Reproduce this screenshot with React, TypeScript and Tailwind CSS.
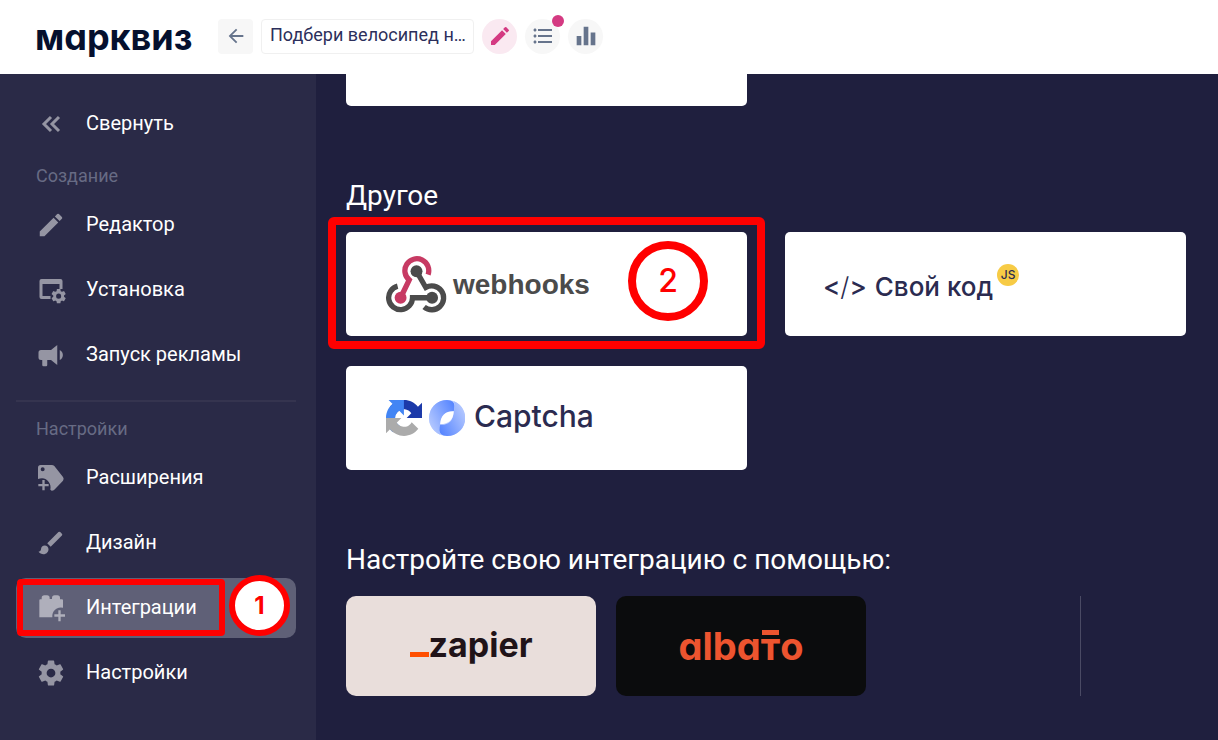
import { useState } from "react";
import type { ReactNode } from "react";
import { MdArrowBack, MdBrush, MdEdit, MdEqualizer, MdFormatListBulleted } from "react-icons/md";

const COG =
  "M12,15.5A3.5,3.5 0 0,1 8.5,12A3.5,3.5 0 0,1 12,8.5A3.5,3.5 0 0,1 15.5,12A3.5,3.5 0 0,1 12,15.5M19.43,12.97C19.47,12.65 19.5,12.33 19.5,12C19.5,11.67 19.47,11.34 19.43,11L21.54,9.37C21.73,9.22 21.78,8.95 21.66,8.73L19.66,5.27C19.54,5.05 19.27,4.96 19.05,5.05L16.56,6.05C16.04,5.66 15.5,5.32 14.87,5.07L14.5,2.42C14.46,2.18 14.25,2 14,2H10C9.75,2 9.54,2.18 9.5,2.42L9.13,5.07C8.5,5.32 7.96,5.66 7.44,6.05L4.95,5.05C4.73,4.96 4.46,5.05 4.34,5.27L2.34,8.73C2.21,8.95 2.27,9.22 2.46,9.37L4.57,11C4.53,11.34 4.5,11.67 4.5,12C4.5,12.33 4.53,12.65 4.57,12.97L2.46,14.63C2.27,14.78 2.21,15.05 2.34,15.27L4.34,18.73C4.46,18.95 4.73,19.03 4.95,18.95L7.44,17.94C7.96,18.34 8.5,18.68 9.13,18.93L9.5,21.58C9.54,21.82 9.75,22 10,22H14C14.25,22 14.46,21.82 14.5,21.58L14.87,18.93C15.5,18.67 16.04,18.34 16.56,17.94L19.05,18.95C19.27,19.03 19.54,18.95 19.66,18.73L21.66,15.27C21.78,15.05 21.73,14.78 21.54,14.63L19.43,12.97Z";

const CollapseIcon = () => (
  <svg viewBox="0 0 30 30" width={30} height={30} fill="none" stroke="currentColor" strokeWidth={3} aria-hidden="true">
    <path d="M15 8L8 15L15 22M23 8L16 15L23 22" />
  </svg>
);

const InstallIcon = () => (
  <svg viewBox="0 0 30 30" width={30} height={30} fill="currentColor" aria-hidden="true">
    <path d="M5.5 4h19a2 2 0 0 1 2 2v8h-3V9h-17v12h8v3h-9a2 2 0 0 1-2-2V6a2 2 0 0 1 2-2z" />
    <g transform="translate(14 12.500) scale(.72)">
      <path fillRule="evenodd" d={COG} />
    </g>
  </svg>
);

const MegaphoneIcon = () => (
  <svg viewBox="0 0 24 24" width={30} height={30} fill="currentColor" aria-hidden="true">
    <path d="M12,8H4A2,2 0 0,0 2,10V14A2,2 0 0,0 4,16H5V20A1,1 0 0,0 6,21H8A1,1 0 0,0 9,20V16H12L17,20V4L12,8M21.5,12C21.5,13.71 20.54,15.26 19,16V8C20.53,8.75 21.5,10.3 21.5,12Z" />
  </svg>
);

const TagPlusIcon = () => (
  <svg viewBox="108 39 90 90" width={30} height={30} fill="currentColor" aria-hidden="true">
    <path
      fillRule="evenodd"
      d="M122 45h33q5 0 8 3l26 33q4 5 0 11l-26 27q-3 3-8 3l-4-3c4-16-8-34-25-34q-6 0-12 2V53q0-8 8-8zM128 52a6 6 0 1 0 0 12a6 6 0 1 0 0-12z"
    />
    <path d="M127 90h7v12h12v7h-12v12h-7v-12h-12v-7h12z" />
  </svg>
);

const BrickPlusIcon = () => (
  <svg viewBox="108 86 90 90" width={30} height={30} fill="currentColor" aria-hidden="true">
    <path d="M118 159v-51q0-3 3-3h4v-4q0-8 8-8h8q8 0 8 8v3h7v-3q0-8 8-8h8q8 0 8 8v4h6q3 0 3 3v22a26 26 0 0 0-32 29z" />
    <path d="M175 138h7v12h13v7h-13v14h-7v-14h-12v-7h12z" />
  </svg>
);

const CogIcon = () => (
  <svg viewBox="0 0 24 24" width={30} height={30} fill="currentColor" aria-hidden="true">
    <path fillRule="evenodd" d={COG} />
  </svg>
);

const WebhooksIcon = () => (
  <svg viewBox="198 272 184 172" width={61} height={57} fill="none" strokeWidth={16} aria-hidden="true">
    <path d="M325 328A36 36 0 1 0 268 344L242 398" stroke="#c73a63" />
    <path d="M290 318L318 367A36 36 0 1 1 313 426" stroke="#4b4b4b" />
    <path d="M337 398H278A36 36 0 1 1 233 363" stroke="#4b4b4b" />
    <circle cx={242} cy={398} r={18} fill="#c73a63" />
    <circle cx={290} cy={318} r={18} fill="#4b4b4b" />
    <circle cx={337} cy={398} r={18} fill="#4b4b4b" />
  </svg>
);

const RecaptchaIcon = () => (
  <svg viewBox="0 0 64 64" width={36} height={36} aria-hidden="true">
    <path fill="#1c3aa9" d="M64 31.955l-.033-1.37V4.687l-7.16 7.16C50.948 4.674 42.033.093 32.05.093c-10.4 0-19.622 4.96-25.458 12.64l11.736 11.86a15.55 15.55 0 0 1 4.754-5.334c2.05-1.6 4.952-2.906 8.968-2.906.485 0 .86.057 1.135.163 4.976.393 9.288 3.14 11.828 7.124l-8.307 8.307L64 31.953" />
    <path fill="#4285f4" d="M31.862.094l-1.37.033H4.594l7.16 7.16C4.58 13.147 0 22.06 0 32.046c0 10.4 4.96 19.622 12.64 25.458L24.5 45.768a15.55 15.55 0 0 1-5.334-4.754c-1.6-2.05-2.906-4.952-2.906-8.968 0-.485.057-.86.163-1.135.393-4.976 3.14-9.288 7.124-11.828l8.307 8.307L31.86.095" />
    <path fill="#ababab" d="M.001 32.045l.033 1.37v25.898l7.16-7.16c5.86 7.173 14.774 11.754 24.76 11.754 10.4 0 19.622-4.96 25.458-12.64l-11.736-11.86a15.55 15.55 0 0 1-4.754 5.334c-2.05 1.6-4.952 2.906-8.968 2.906-.485 0-.86-.057-1.135-.163-4.976-.393-9.288-3.14-11.828-7.124l8.307-8.307c-10.522.04-22.4.066-27.295-.005" />
  </svg>
);

const SmartCaptchaIcon = () => (
  <svg viewBox="267 121 106 106" width={36} height={36} aria-hidden="true">
    <defs>
      <linearGradient id="lobeLeft" x1="0" y1="0.700" x2="1" y2="0">
        <stop offset="0" stopColor="#b4c8ff" />
        <stop offset="1" stopColor="#4f80ff" />
      </linearGradient>
      <linearGradient id="lobeRight" x1="0" y1="1" x2="1" y2="0.300">
        <stop offset="0" stopColor="#4f80ff" />
        <stop offset="1" stopColor="#b4c8ff" />
      </linearGradient>
    </defs>
    <circle cx={320} cy={174} r={53} fill="#bdcfff" />
    <path d="M320 121Q341 122 342 138Q342 148 340 154Q302 152 300 194L300 223A53 53 0 0 1 320 121z" fill="url(#lobeLeft)" />
    <path d="M320 227Q299 226 298 210Q298 200 300 194Q338 196 340 154Q344 142 341 125A53 53 0 0 1 320 227z" fill="url(#lobeRight)" />
    <path d="M340 154Q338 192 300 192Q302 154 340 154z" fill="#fff" />
  </svg>
);

type NavItem = { id: string; label: string; icon: ReactNode };

const CREATE_ITEMS: NavItem[] = [
  { id: "editor", label: "Редактор", icon: <MdEdit size={30} /> },
  { id: "install", label: "Установка", icon: <InstallIcon /> },
  { id: "ads", label: "Запуск рекламы", icon: <MegaphoneIcon /> },
];

const SETTINGS_ITEMS: NavItem[] = [
  { id: "extensions", label: "Расширения", icon: <TagPlusIcon /> },
  { id: "design", label: "Дизайн", icon: <MdBrush size={30} /> },
  { id: "integrations", label: "Интеграции", icon: <BrickPlusIcon /> },
  { id: "settings", label: "Настройки", icon: <CogIcon /> },
];

function NavLink({ item, active, onSelect }: { item: NavItem; active: boolean; onSelect: (id: string) => void }) {
  return (
    <a
      href={`#${item.id}`}
      onClick={() => onSelect(item.id)}
      className={`relative flex h-[60px] items-center gap-5 rounded-[10px] px-5 text-xl text-white ${active ? "bg-[#5f6077]" : ""}`}
    >
      <span className={active ? "text-[#afafbb]" : "text-[#9595a3]"}>{item.icon}</span>
      <span className="pb-0.5">{item.label}</span>
      {item.id === "integrations" && (
        <>
          <span className="absolute top-px left-px h-[57px] w-[208px] rounded-sm border-6 border-[#ff0000]" />
          <span className="absolute -top-[3px] right-[6px] flex size-[61px] items-center justify-center rounded-full border-6 border-[#ff0000] bg-white font-[Inter,sans-serif] text-2xl font-bold text-[#ff0000]">
            1
          </span>
        </>
      )}
    </a>
  );
}

export default function App() {
  const [active, setActive] = useState("integrations");
  const [title, setTitle] = useState("Подбери велосипед н…");

  return (
    <div className="flex min-h-screen flex-col bg-[#1f1f3e] font-[Roboto,sans-serif]">
      {/* HEADER */}
      <header className="flex h-[74px] items-center gap-2 bg-white pb-px pl-[35px]">
        <a href="#home" className="w-[175px] font-[Inter,sans-serif] text-4xl font-bold text-[#05102e] [font-feature-settings:'cv11']">марквиз</a>
        <button aria-label="Назад" className="flex size-[35px] items-center justify-center rounded bg-[#f7f7f7] pb-0.5 text-[#66748c]"><MdArrowBack size={22} /></button>
        <input
          aria-label="Название квиза"
          value={title}
          onChange={(e) => setTitle(e.target.value)}
          className="h-[35px] w-[213px] rounded border border-[#f0f0f0] pb-1 pl-2 text-lg text-[#2c2f5b]"
        />
        <button aria-label="Редактировать" className="flex size-[35px] items-center justify-center rounded-full bg-[#fae9f1] pb-0.5 text-[#d43a82]"><MdEdit size={24} /></button>
        <button aria-label="Заявки" className="relative flex size-[35px] items-center justify-center rounded-full bg-[#f7f7f7] pb-0.5 text-[#66748c]">
          <MdFormatListBulleted size={24} />
          <span className="absolute -top-1 -right-1 size-3 rounded-full bg-[#d43a82]" />
        </button>
        <button aria-label="Статистика" className="flex size-[35px] items-center justify-center rounded-full bg-[#f7f7f7] pb-0.5 text-[#66748c]"><MdEqualizer size={28} /></button>
      </header>

      <div className="flex flex-1">
        {/* SIDEBAR */}
        <nav className="w-[316px] shrink-0 bg-[#2a2a47] px-4 pt-5 pr-5">
          <button className="flex h-[60px] w-full items-center gap-5 px-5 text-xl text-white">
            <span className="text-[#9595a3]"><CollapseIcon /></span>
            <span className="pb-0.5">Свернуть</span>
          </button>
          <h2 className="flex h-[41px] items-center px-5 pt-0.5 text-lg text-[#676b84]">Создание</h2>
          <div className="flex flex-col gap-[5px]">
            {CREATE_ITEMS.map((item) => (
              <NavLink key={item.id} item={item} active={active === item.id} onSelect={setActive} />
            ))}
          </div>
          <hr className="mt-[15px] border-t-2 border-[#35344f]" />
          <h2 className="flex h-[46px] items-center px-5 pt-2 text-lg text-[#676b84]">Настройки</h2>
          <div className="flex flex-col gap-[5px]">
            {SETTINGS_ITEMS.map((item) => (
              <NavLink key={item.id} item={item} active={active === item.id} onSelect={setActive} />
            ))}
          </div>
        </nav>

        {/* CONTENT */}
        <main className="min-w-0 flex-1 pr-8 pl-[30px] text-[#2b2b50]">
          <div className="grid grid-cols-2 gap-x-[38px]">
            <div className="h-8 rounded-b-[5px] bg-white" />
          </div>

          <h1 className="mt-[70px] mb-4 text-[28px] leading-10 text-white">Другое</h1>
          <div className="grid grid-cols-2 gap-x-[38px] gap-y-[30px]">
            <a href="#webhooks" className="relative flex h-[104px] items-center gap-[6px] rounded-[5px] bg-white pl-10">
              <WebhooksIcon />
              <span className="pt-0.5 font-['Liberation_Sans',sans-serif] text-[28px] font-bold text-[#4b4b4b]">webhooks</span>
              <span className="absolute -inset-x-[18px] -top-[15px] -bottom-[13px] rounded-md border-8 border-[#ff0000]" />
              <span className="absolute top-[9px] right-[39px] flex size-20 items-center justify-center rounded-full border-8 border-[#ff0000] font-[Inter,sans-serif] text-[32px] font-medium text-[#ff0000]">
                2
              </span>
            </a>
            <a href="#code" className="flex h-[104px] items-center gap-2 rounded-[5px] bg-white pt-1 pl-[38px] font-[Inter,sans-serif] text-[26px] font-medium">
              <span className="flex">
                &lt;<span className="font-light">/</span>&gt;
              </span>
              <span className="relative">
                Свой код
                <span className="absolute -top-[3px] left-full ml-1 flex size-[22px] items-center justify-center rounded-full bg-[#f7cb45] text-xs">JS</span>
              </span>
            </a>
            <a href="#captcha" className="flex h-[104px] items-center gap-[7px] rounded-[5px] bg-white pl-10 font-[Inter,sans-serif] text-[30px] font-medium">
              <RecaptchaIcon />
              <SmartCaptchaIcon />
              <span className="pb-1 pl-0.5">Captcha</span>
            </a>
          </div>

          <h1 className="mt-[70px] mb-4 text-[28px] leading-10 text-white">Настройте свою интеграцию с помощью:</h1>
          <div className="flex gap-5">
            <a href="#zapier" className="flex h-[100px] w-[250px] items-center justify-center rounded-[10px] bg-[#e9dedb] pb-1 font-[Inter,sans-serif] text-[34px] font-bold text-[#201318]">
              <span className="mt-5 h-[5px] w-[19px] bg-[#ff4f00]" />
              zapier
            </a>
            <a href="#albato" className="flex h-[100px] w-[250px] items-center justify-center rounded-[10px] bg-[#0b0c0d] font-[Inter,sans-serif] text-[38px] font-bold text-[#ed542f] [font-feature-settings:'cv11']">
              alba
              <span className="relative">
                т<span className="absolute inset-x-px top-3 h-[5px] bg-[#ed542f]" />
              </span>
              o
            </a>
            <div className="mr-[105px] ml-auto w-px bg-[#4a4a64]" />
          </div>
        </main>
      </div>
    </div>
  );
}
